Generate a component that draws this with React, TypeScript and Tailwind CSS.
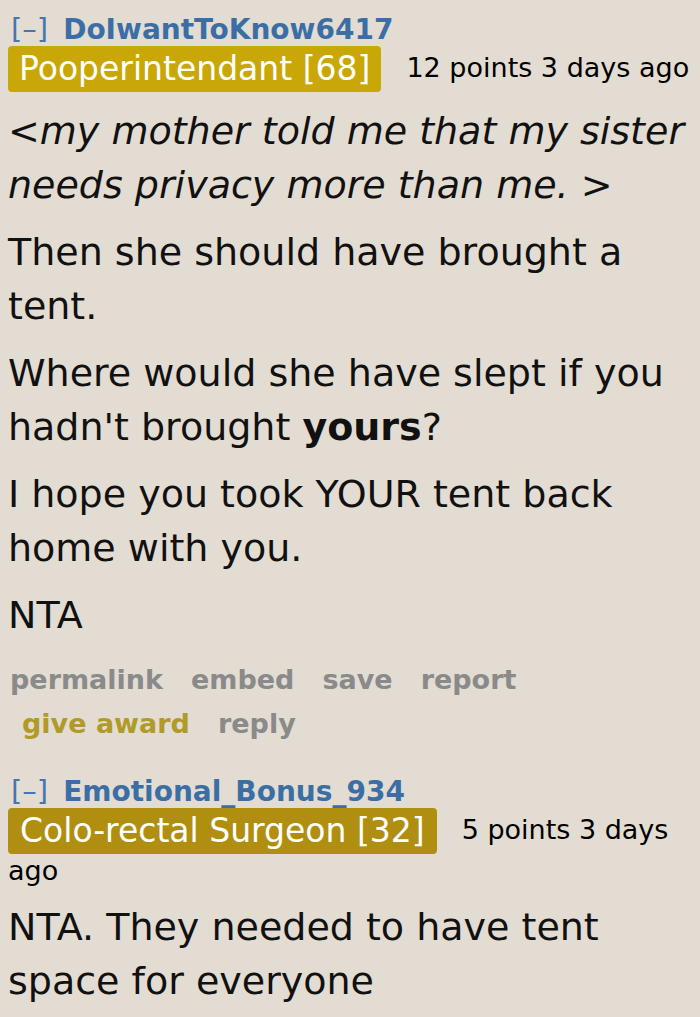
import React from "react";

const body = { fontFamily: '"DejaVu Sans", Verdana, sans-serif' };

function Header({ user, flair, flairBg, meta, pad }: { user: string; flair: string; flairBg: string; meta: string; pad: string }) {
  return (
    <div style={body}>
      <div className="text-[28px] leading-[32px] text-[#3c6ea6]">
        <span className="font-normal text-[29px] pl-[3px] mr-[15px] text-[#4676b0]">[–]</span>
        <span className="font-bold">{user}</span>
      </div>
      <div className="text-[27px] leading-[34px] text-black">
        <span className={`inline-block align-middle rounded-[4px] text-[33px] leading-[46px] text-white mr-[25px] ${pad} ${flairBg}`}>{flair}</span>
        {meta}
      </div>
    </div>
  );
}

export default function App() {
  return (
    <div className="w-[700px] h-[1017px] bg-[#e3dcd2] px-[8px] pt-[13px] overflow-hidden">
      <Header user="DoIwantToKnow6417" flair="Pooperintendant [68]" flairBg="bg-[#c9a706]" meta="12 points 3 days ago" pad="px-[11px]" />
      <div className="text-[38px] leading-[54px] text-[#111]" style={body}>
        <p className="italic mt-[12px]">&lt;my mother told me that my sister needs privacy more than me. &gt;</p>
        <p className="mt-[13px]">Then she should have brought a tent.</p>
        <p className="mt-[13px]">Where would she have slept if you hadn't brought <b>yours</b>?</p>
        <p className="mt-[13px]">I hope you took YOUR tent back home with you.</p>
        <p className="mt-[13px]">NTA</p>
      </div>
      <div className="mt-[16px] font-bold text-[27px] leading-[44px] text-[#8a8a8a]" style={body}>
        <div className="flex gap-[28px] pl-[2px]">
          <span>permalink</span><span>embed</span><span>save</span><span>report</span>
        </div>
        <div className="flex gap-[28px] pl-[14px]">
          <span className="text-[#b09a28]">give award</span><span>reply</span>
        </div>
      </div>
      <div className="mt-[29px]">
        <Header user="Emotional_Bonus_934" flair="Colo-rectal Surgeon [32]" flairBg="bg-[#b08f10]" meta="5 points 3 days ago" pad="px-[12px]" />
      </div>
      <div className="text-[38px] leading-[54px] text-[#111]" style={body}>
        <p className="mt-[12px]">NTA. They needed to have tent space for everyone</p>
      </div>
    </div>
  );
}
